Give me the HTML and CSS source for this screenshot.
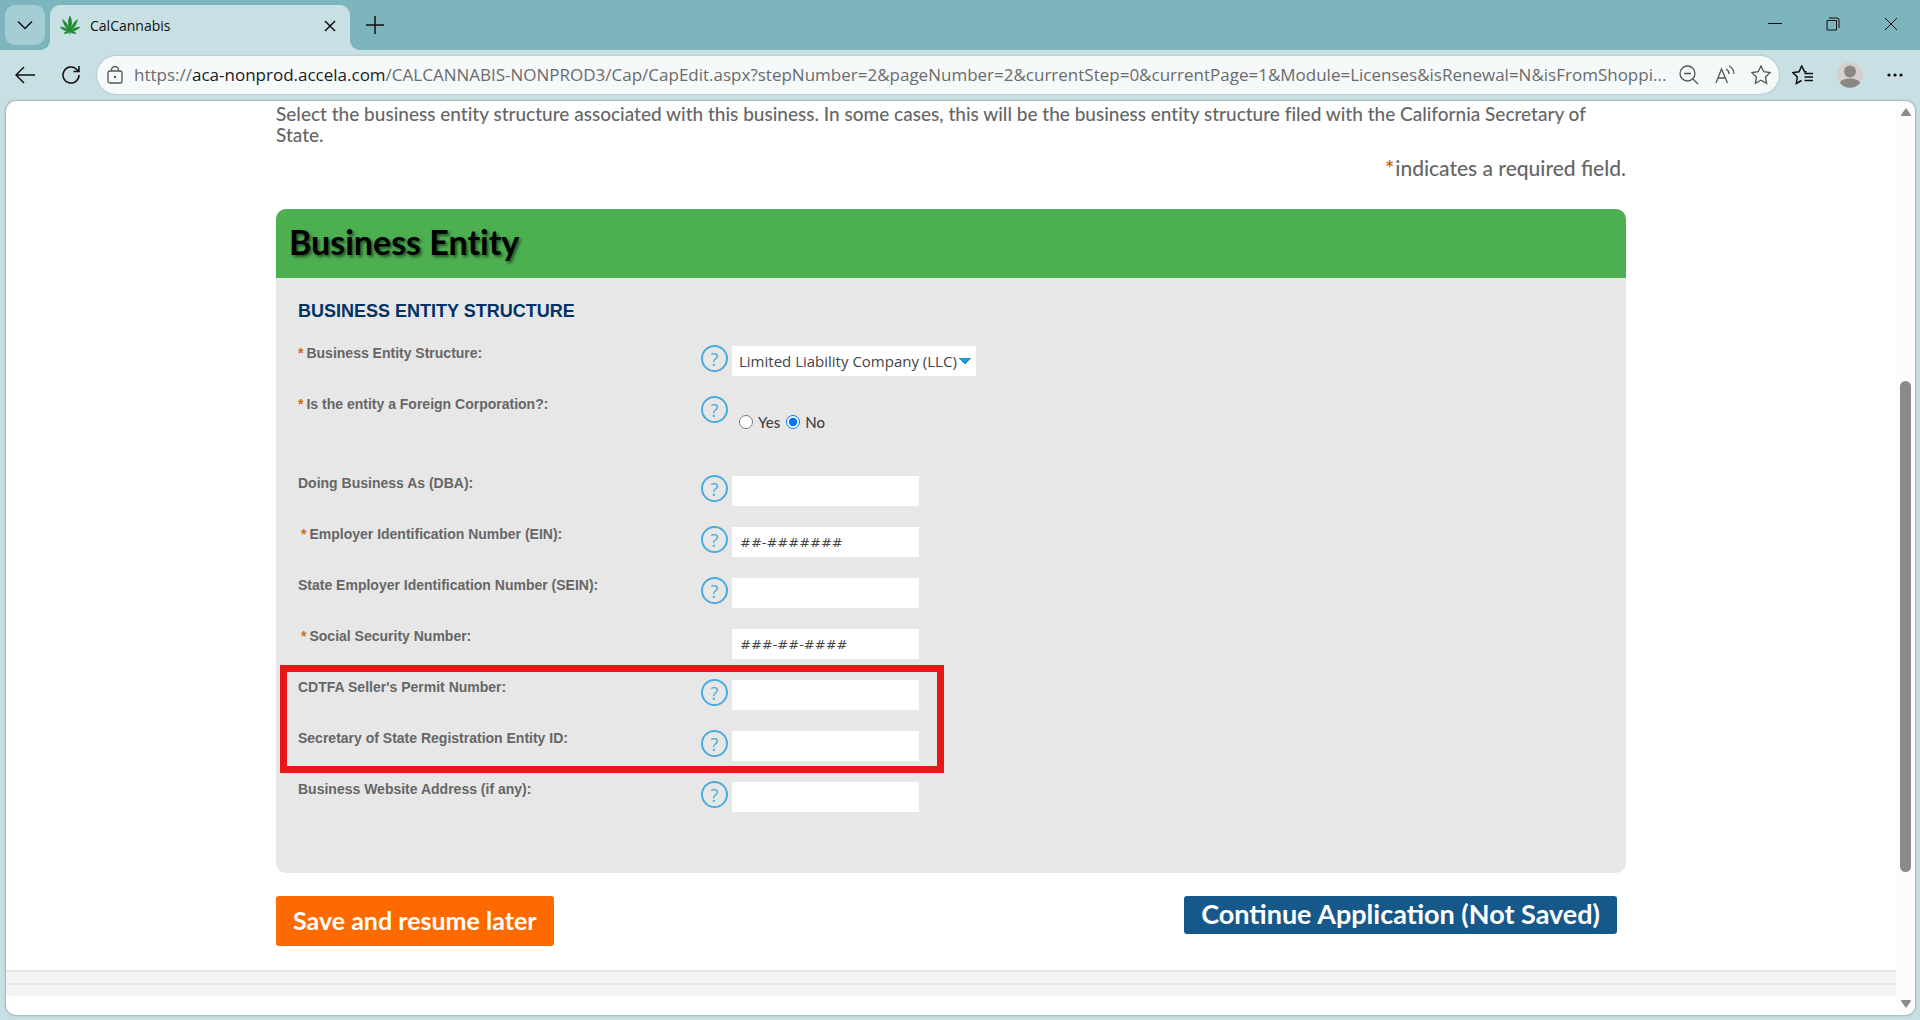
FILE: index.html
```html
<!DOCTYPE html>
<html lang="en">
  <head>
    <meta charset="utf-8">
    <title>CalCannabis</title>
    <link rel="stylesheet" href="styles.css">
  </head>

  <body>
    <header class="browser">
      <div class="tab-bar">
        <button class="tab-menu" type="button" aria-label="Tab actions">
          <svg width="16" height="10" viewBox="0 0 16 10"><path d="M1 1.5l7 7 7-7" /></svg>
        </button>
        <div class="tab">
          <svg class="leaf" width="20" height="20" viewBox="0 0 20 20">
            <path d="M10 0C8 4 8 8 9.400 13C7.500 8.500 5.500 5.500 2.500 3.500C3.400 7.500 5 10.500 8.500 13.800C6 12 3.200 11 0 11.200C2.500 13.600 5 14.800 8.700 15C6.500 15.200 5 16 4 17.400C6.500 17.800 8.200 17 9.700 15.600V18H10.300V15.600C11.800 17 13.500 17.800 16 17.400C15 16 13.500 15.200 11.300 15C15 14.800 17.500 13.600 20 11.200C16.800 11 14 12 11.500 13.800C15 10.500 16.600 7.500 17.500 3.500C14.500 5.500 12.500 8.500 10.600 13C12 8 12 4 10 0Z" />
          </svg>
          <span class="tab-title">CalCannabis</span>
          <button class="tab-close" type="button" aria-label="Close tab">
            <svg width="12" height="12" viewBox="0 0 12 12"><path d="M1 1l10 10M11 1L1 11" /></svg>
          </button>
        </div>
        <button class="new-tab" type="button" aria-label="New tab">
          <svg width="20" height="20" viewBox="0 0 20 20"><path d="M10 1v18M1 10h18" /></svg>
        </button>
        <div class="window-buttons">
          <button type="button" aria-label="Minimize">
            <svg width="14" height="14" viewBox="0 0 14 14"><path d="M0 6.500h14" /></svg>
          </button>
          <button type="button" aria-label="Restore">
            <svg width="14" height="14" viewBox="0 0 14 14"><path d="M1 3.500h9.500V13H1zM3 1h8a2 2 0 0 1 2 2v8" /></svg>
          </button>
          <button type="button" aria-label="Close">
            <svg width="14" height="14" viewBox="0 0 14 14"><path d="M1 1l12 12M13 1L1 13" /></svg>
          </button>
        </div>
      </div>

      <div class="toolbar">
        <button class="nav-button" type="button" aria-label="Back">
          <svg width="20" height="18" viewBox="0 0 20 18"><path d="M20 9H1M9 1L1 9l8 8" /></svg>
        </button>
        <button class="nav-button" type="button" aria-label="Refresh">
          <svg width="20" height="20" viewBox="0 0 20 20"><path d="M18 10a8 8 0 1 1-2.500-5.800L17.500 6M18 1v5.500h-5.500" /></svg>
        </button>
        <div class="address">
          <svg width="16" height="18" viewBox="0 0 16 18"><rect x="1" y="5" width="14" height="12" rx="2" /><path d="M4.500 5V4a3.500 3.500 0 0 1 7 0v1" /><circle class="solid" cx="8" cy="11" r="1.200" /></svg>
          <span class="url">https://<span class="host">aca-nonprod.accela.com</span>/CALCANNABIS-NONPROD3/Cap/CapEdit.aspx?stepNumber=2&amp;pageNumber=2&amp;currentStep=0&amp;currentPage=1&amp;Module=Licenses&amp;isRenewal=N&amp;isFromShoppi...</span>
          <span class="address-icons">
            <svg width="20" height="20" viewBox="0 0 20 20"><circle cx="8.500" cy="8.500" r="7.500" /><path d="M14 14l5 5M5 8.500h7" /></svg>
            <svg width="20" height="20" viewBox="0 0 20 20"><path d="M1 18L6.500 4l6 14M3 13h7.500M11 4c2 1 3 3 3 5M14 1c3 1.500 5 4.500 5 8" /></svg>
            <svg width="20" height="20" viewBox="0 0 20 20"><path d="M10 1l2.800 5.700 6.200.9-4.500 4.400 1.100 6.300L10 15.300l-5.600 3 1.100-6.300L1 7.600l6.200-.9z" /></svg>
          </span>
        </div>
        <div class="toolbar-icons">
          <svg width="21" height="20" viewBox="0 0 21 20"><path d="M9.500 15.500L4.300 18.500l1-6.500L1 7.600l6-.9L9.700 1l2.800 5.700h2M12.500 8.500H21M12.500 12H21M12.500 15.500H21" /></svg>
          <svg class="avatar" width="26" height="26" viewBox="0 0 26 26"><circle class="backdrop" cx="13" cy="13" r="13" /><circle cx="13" cy="9.500" r="6" /><path d="M3 21c1-6 19-6 20 0a13 13 0 0 1-20 0z" /></svg>
          <svg class="dots" width="16" height="4" viewBox="0 0 16 4"><circle cx="2" cy="2" r="1.600" /><circle cx="8" cy="2" r="1.600" /><circle cx="14" cy="2" r="1.600" /></svg>
        </div>
      </div>
    </header>

    <div class="viewport">
      <div class="page">
        <main>
          <p class="intro">Select the business entity structure associated with this business. In some cases, this will be the business entity structure filed with the California Secretary of State.</p>
          <p class="required-note"><span class="star">*</span>indicates a required field.</p>

          <form class="panel">
            <h1>Business Entity</h1>

            <div class="fields">
              <h2>BUSINESS ENTITY STRUCTURE</h2>

              <div class="field">
                <label for="structure"><span class="star">*</span>Business Entity Structure:</label>
                <button class="help" type="button">?</button>
                <select id="structure">
                  <option>Limited Liability Company (LLC)</option>
                </select>
              </div>

              <div class="field foreign" role="radiogroup" aria-labelledby="foreign-label">
                <span class="label" id="foreign-label"><span class="star">*</span>Is the entity a Foreign Corporation?:</span>
                <button class="help" type="button">?</button>
                <div class="radios">
                  <input type="radio" name="foreign" id="foreign-yes">
                  <label for="foreign-yes">Yes</label>
                  <input type="radio" name="foreign" id="foreign-no" checked>
                  <label for="foreign-no">No</label>
                </div>
              </div>

              <div class="field">
                <label for="dba">Doing Business As (DBA):</label>
                <button class="help" type="button">?</button>
                <input type="text" id="dba">
              </div>

              <div class="field masked">
                <label for="ein"><span class="star">*</span>Employer Identification Number (EIN):</label>
                <button class="help" type="button">?</button>
                <input type="text" id="ein" placeholder="##-#######">
              </div>

              <div class="field">
                <label for="sein">State Employer Identification Number (SEIN):</label>
                <button class="help" type="button">?</button>
                <input type="text" id="sein">
              </div>

              <div class="field masked">
                <label for="ssn"><span class="star">*</span>Social Security Number:</label>
                <input type="text" id="ssn" placeholder="###-##-####">
              </div>

              <div class="highlight">
                <div class="field">
                  <label for="permit">CDTFA Seller's Permit Number:</label>
                  <button class="help" type="button">?</button>
                  <input type="text" id="permit">
                </div>

                <div class="field">
                  <label for="entity-id">Secretary of State Registration Entity ID:</label>
                  <button class="help" type="button">?</button>
                  <input type="text" id="entity-id">
                </div>
              </div>

              <div class="field">
                <label for="website">Business Website Address (if any):</label>
                <button class="help" type="button">?</button>
                <input type="text" id="website">
              </div>
            </div>
          </form>

          <div class="actions">
            <button class="save" type="button">Save and resume later</button>
            <button class="continue" type="button">Continue Application (Not Saved)</button>
          </div>
        </main>

        <footer>
          <div class="strip"></div>
          <div class="strip"></div>
        </footer>
      </div>

      <div class="scrollbar">
        <svg width="10" height="8" viewBox="0 0 10 8"><path d="M5 0l5 7a1 1 0 0 1-1 1H1a1 1 0 0 1-1-1z" /></svg>
        <div class="track"><div class="thumb"></div></div>
        <svg width="10" height="8" viewBox="0 0 10 8"><path d="M5 8L0 1a1 1 0 0 1 1-1h8a1 1 0 0 1 1 1z" /></svg>
      </div>
    </div>
  </body>
</html>
```

FILE: styles.css
```css
*,
*::before,
*::after {
  box-sizing: border-box;
}

body {
  margin: 0;
  height: 100vh;
  display: flex;
  flex-direction: column;
  background-color: #c8dfe3;
  color: #666;
  font-family: Lato, sans-serif;
  font-variant-ligatures: none;
}

button {
  border: 0;
  padding: 0;
  background: none;
  font-family: inherit;
}

svg {
  display: block;
  flex-shrink: 0;
}

/* browser */

.browser {
  font-family: "Open Sans", sans-serif;

  & svg {
    fill: none;
    stroke: #111;
    stroke-width: 1.5;
  }
}

.tab-bar {
  display: flex;
  align-items: flex-start;
  height: 50px;
  padding: 5px 5px 0;
  background-color: #7db5be;
}

.tab-menu {
  width: 40px;
  height: 40px;
  display: grid;
  place-items: center;
  border-radius: 10px;
  background-color: #a5cdd4;
}

.tab {
  position: relative;
  display: flex;
  align-items: center;
  width: 300px;
  height: 45px;
  margin-left: 5px;
  padding: 0 14px 4px 10px;
  border-radius: 10px 10px 0 0;
  background-color: #c8dfe3;

  /* curved feet of the active tab */
  &::before,
  &::after {
    content: "";
    position: absolute;
    bottom: 0;
    width: 10px;
    height: 10px;
  }

  &::before {
    left: -10px;
    background: radial-gradient(circle at 0 0, transparent 10px, #c8dfe3 10px);
  }

  &::after {
    right: -10px;
    background: radial-gradient(circle at 100% 0, transparent 10px, #c8dfe3 10px);
  }

  & .leaf {
    fill: #1c8a2e;
    stroke: #1c8a2e;
    stroke-width: 0.6;
  }
}

.tab-title {
  flex-grow: 1;
  margin-left: 10px;
  font-size: 14px;
  color: #111;
}

.new-tab {
  margin: 10px 0 0 15px;
}

.window-buttons {
  display: flex;
  gap: 44px;
  margin: 12px 17px 0 auto;

  & svg {
    stroke-width: 1;
  }
}

.toolbar {
  display: flex;
  align-items: center;
  height: 50px;
  padding-left: 15px;
}

.nav-button {
  width: 22px;
  margin-right: 24px;
}

.address {
  display: flex;
  align-items: center;
  flex: 1;
  min-width: 0;
  height: 38px;
  margin-left: -10px;
  padding: 0 8px 0 10px;
  border-radius: 19px;
  background-color: #f5f9fa;
  box-shadow: 0 0 2px #8fa7ab;

  & svg {
    stroke: #555;
    stroke-width: 1.3;
  }

  & .solid {
    fill: #555;
    stroke: none;
  }
}

.url {
  flex: 1;
  margin: 0 4px 2px 11px;
  overflow: hidden;
  white-space: nowrap;
  font-size: 17px;
  color: #6b6b6b;
}

.host {
  color: #1a1a1a;
}

.address-icons {
  display: flex;
  gap: 16px;
}

.toolbar-icons {
  display: flex;
  align-items: center;
  gap: 24px;
  margin: 0 17px 0 13px;

  & .avatar {
    fill: #8d8784;
    stroke: none;
  }

  & .backdrop {
    fill: #d5d0cd;
  }

  & .dots {
    fill: #111;
    stroke: none;
  }
}

/* page */

.viewport {
  flex: 1;
  display: flex;
  min-height: 0;
  margin: 1px 5px 5px 6px;
  border-radius: 10px;
  overflow: hidden;
  background-color: #fff;
  box-shadow: 0 0 2px 1px #a3b5b8;
}

.page {
  flex: 1;
  overflow: hidden;
}

main {
  max-width: 1350px;
  margin: 0 auto;
}

.star {
  color: #c76a10;
  font-weight: bold;
}

.intro {
  margin: 2px 0 0;
  font-size: 19px;
  font-weight: 500;
  line-height: 21px;
}

.required-note {
  margin: 10px 0 28px;
  font-size: 21px;
  font-weight: 500;
  line-height: 26px;
  text-align: right;
  font-variant-ligatures: normal;

  & .star {
    margin-right: 1px;
  }
}

.panel {
  border-radius: 10px;
  overflow: hidden;
  background-color: #e7e7e7;
}

h1 {
  margin: 0;
  padding: 13px 13px 16px;
  background-color: #4caf50;
  color: #000;
  font-size: 34px;
  line-height: 40px;
  text-shadow: 2px 2px 3px #0008;
}

h2 {
  margin: 0 0 24px;
  color: #003366;
  font-family: "Liberation Sans", sans-serif;
  font-size: 18px;
  line-height: 20px;
}

.fields {
  padding: 23px 22px 41px;
}

.field {
  display: flex;
  align-items: flex-start;
  height: 51px;

  & > label,
  & > .label {
    width: 403px;
    font-family: "Liberation Sans", sans-serif;
    font-size: 14px;
    font-weight: bold;
    line-height: 16px;
  }

  & > label .star,
  & > .label .star {
    margin-right: 3px;
  }

  & input[type="text"],
  & select {
    height: 30px;
    margin: 1px 0 0 4px;
    border: 0;
    background-color: #fff;
    color: #444;
  }

  & input[type="text"] {
    width: 187px;
    padding: 0 8px;
    font-family: "DejaVu Sans", sans-serif;
    font-size: 13px;
  }

  & label + input[type="text"] {
    margin-left: 31px;
  }

  & input::placeholder {
    color: #444;
  }

  & select {
    width: 244px;
    padding: 0 7px;
    appearance: none;
    background-image: linear-gradient(to bottom left, #1b9ad6 50%, transparent 50%), linear-gradient(to bottom right, #1b9ad6 50%, transparent 50%);
    background-position: right 11px center, right 5px center;
    background-size: 6px 7px;
    background-repeat: no-repeat;
    font-family: "Open Sans", sans-serif;
    font-size: 15px;
  }
}

.masked > label {
  padding-left: 3px;
}

.foreign {
  height: 79px;
}

.help {
  width: 27px;
  height: 27px;
  flex-shrink: 0;
  border: 2px solid #4bacdc;
  border-radius: 50%;
  color: #4bacdc;
  font-family: "Open Sans", sans-serif;
  font-size: 18px;
  line-height: 22px;
}

.radios {
  display: flex;
  align-items: center;
  margin: 16px 0 0 11px;
  color: #444;
  font-size: 15px;
  font-weight: 500;
  line-height: 20px;

  & input {
    width: 14px;
    height: 14px;
    margin: 0 5px 0 0;
  }

  & label {
    margin-right: 6px;
  }
}

.highlight {
  position: relative;

  &::after {
    content: "";
    position: absolute;
    top: -14px;
    left: -18px;
    width: 664px;
    height: 108px;
    border: 7px solid #e61919;
    pointer-events: none;
  }
}

.actions {
  display: flex;
  align-items: flex-start;
  justify-content: space-between;
  padding: 23px 9px 24px 0;

  & button {
    border-radius: 3px;
    color: #fff;
    font-weight: bold;
  }

  & .save {
    height: 50px;
    padding: 0 17px 2px;
    background-color: #ff6a00;
    font-size: 25px;
  }

  & .continue {
    height: 38px;
    padding: 0 17px 2px;
    background-color: #17588b;
    font-size: 27px;
    line-height: 36px;
  }
}

.strip {
  height: 13px;
  border-top: 2px solid #e6e6e6;
  background-color: #f4f4f4;
}

.scrollbar {
  display: flex;
  flex-direction: column;
  align-items: center;
  width: 19px;
  padding: 7px 0;
  background-color: #fcfcfc;

  & svg {
    fill: #8a8a8a;
  }
}

.track {
  flex: 1;
  display: flex;
  flex-direction: column;
  justify-content: flex-end;
  padding-bottom: 128px;
}

.thumb {
  width: 11px;
  height: 65%;
  border-radius: 6px;
  background-color: #8a8a8a;
}
```
